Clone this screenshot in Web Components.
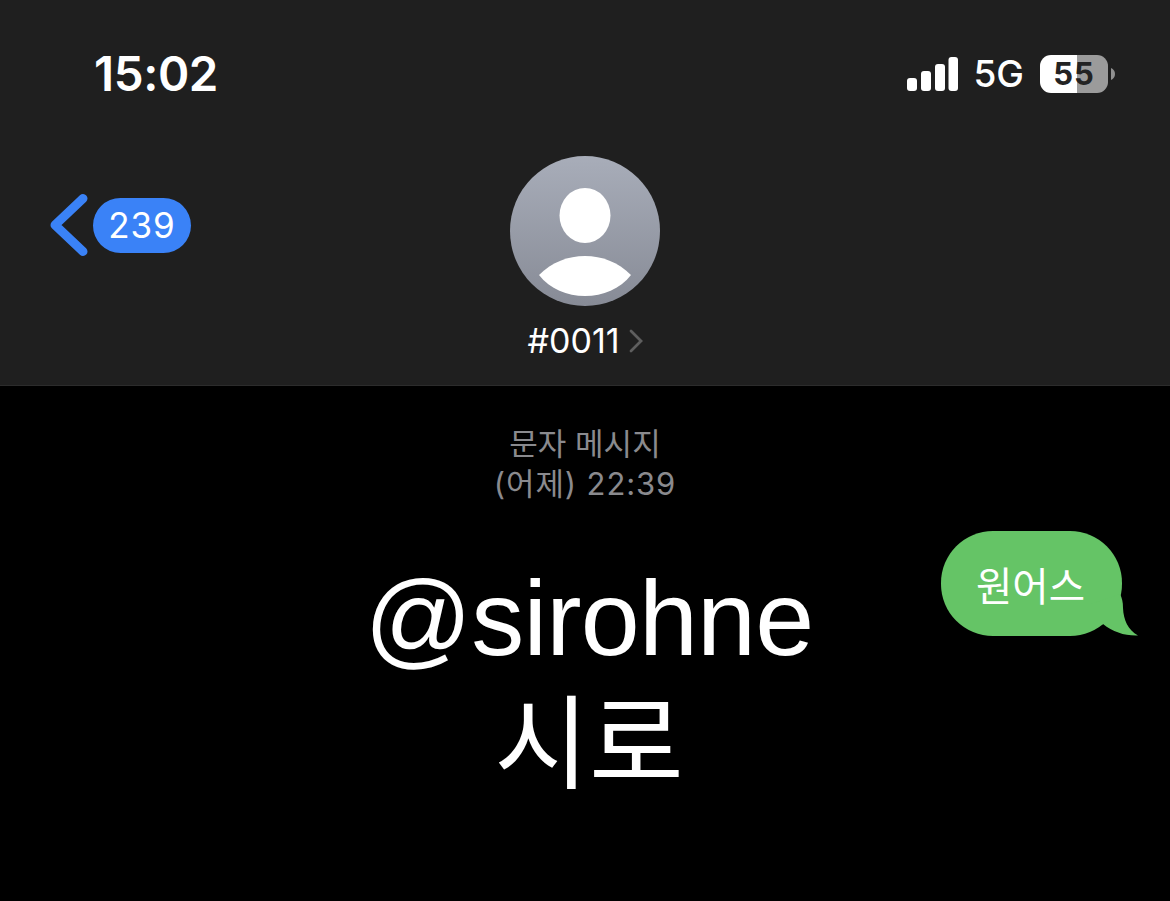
<!DOCTYPE html>
<html lang="ko">
<head>
<meta charset="utf-8">
<title>Messages</title>
<style>
  html, body { margin: 0; height: 100%; background: #000; }
  body { width: 1170px; height: 901px; overflow: hidden; font-family: "Inter", "Noto Sans CJK KR", sans-serif; color: #fff; }
</style>
</head>
<body>
<chat-screen>
  <status-bar slot="header" time="15:02" network="5G" battery="55"></status-bar>
  <contact-nav slot="header" count="239" name="#0011"></contact-nav>
  <message-stamp label="문자 메시지" time="(어제) 22:39"></message-stamp>
  <message-row text="원어스"></message-row>
  <big-caption handle="@sirohne" name="시로"></big-caption>
</chat-screen>

<script>
class chatScreen extends HTMLElement {
  connectedCallback() {
    this.attachShadow({mode: 'open'});
    this.shadowRoot.innerHTML = `
    <style>
      :host { display: flex; flex-direction: column; width: 1170px; height: 901px; background: #000; }
      .chat-screen__header {
        display: flex;
        flex-direction: column;
        height: 385px;
        background: #1f1f1f;
        border-bottom: 1px solid #2c2c2c;
      }
      .chat-screen__body { display: flex; flex-direction: column; }
    </style>
    <div class="chat-screen__header"><slot name="header"></slot></div>
    <div class="chat-screen__body"><slot></slot></div>`;
  }
}

class statusBar extends HTMLElement {
  connectedCallback() {
    const time = this.getAttribute('time');
    const network = this.getAttribute('network');
    const battery = this.getAttribute('battery');
    this.attachShadow({mode: 'open'});
    this.shadowRoot.innerHTML = `
    <style>
      :host { display: flex; justify-content: space-between; align-items: center; height: 150px; padding: 0 55px 0 94px; box-sizing: border-box; margin-bottom: 6px; }
      .status-bar__time { font: 600 47.5px/1 "Inter", sans-serif; letter-spacing: -0.4px; margin-top: -2px; }
      .status-bar__right { display: flex; align-items: center; margin-top: -3px; }
      .status-bar__signal { display: block; margin-right: 15px; }
      .status-bar__network { font: 500 37px/1 "Inter", sans-serif; margin-right: 16px; letter-spacing: 0; }
      .status-bar__battery {
        width: 68px;
        height: 38px;
        border-radius: 11px;
        background: linear-gradient(90deg, #fff 0 37px, #9b9b9b 37px);
        color: #232323;
        font: 700 31px/38px "Inter", sans-serif;
        text-align: center;
        letter-spacing: 1px;
      }
      .status-bar__nub { display: block; margin-left: 3px; }
    </style>
    <div class="status-bar__time">${time}</div>
    <div class="status-bar__right">
      <svg class="status-bar__signal" width="51" height="34" viewBox="0 0 51 34" fill="#fff">
        <rect x="0" y="21" width="10" height="13" rx="3"/>
        <rect x="14" y="14" width="10" height="20" rx="3"/>
        <rect x="28" y="7" width="10" height="27" rx="3"/>
        <rect x="41.5" y="0" width="9.5" height="34" rx="3"/>
      </svg>
      <div class="status-bar__network">${network}</div>
      <div class="status-bar__battery">${battery}</div>
      <svg class="status-bar__nub" width="4" height="12" viewBox="0 0 4 12"><path d="M0 0 C2.6 1 4 3.4 4 6 C4 8.6 2.6 11 0 12Z" fill="#8f8f8f"/></svg>
    </div>`;
  }
}

class contactNav extends HTMLElement {
  connectedCallback() {
    const count = this.getAttribute('count');
    const name = this.getAttribute('name');
    this.attachShadow({mode: 'open'});
    this.shadowRoot.innerHTML = `
    <style>
      :host { display: grid; grid-template-columns: 1fr auto 1fr; }
      .contact-nav__back { display: flex; align-items: center; gap: 5px; height: 150px; align-self: start; margin: -6px 0 0 50px; }
      .contact-nav__back svg { display: block; }
      .contact-nav__count {
        display: flex; align-items: center; justify-content: center;
        width: 98px; height: 55px; border-radius: 27.5px;
        background: #3a82f7;
        font: 400 35px/1 "Inter", sans-serif;
        letter-spacing: 1px;
      }
      .contact-nav__person { display: flex; flex-direction: column; align-items: center; }
      .contact-nav__avatar { display: block; }
      .contact-nav__name {
        display: flex; align-items: center; gap: 9px;
        margin-top: 15px;
        font: 400 34px/39px "Inter", sans-serif;
      }
    </style>
    <div class="contact-nav__back">
      <svg width="38" height="64" viewBox="0 0 38 64" fill="none">
        <path d="M33 5.5 L5 32 L33 58.5" stroke="#3a82f7" stroke-width="9" stroke-linecap="round" stroke-linejoin="round"/>
      </svg>
      <div class="contact-nav__count">${count}</div>
    </div>
    <div class="contact-nav__person">
      <svg class="contact-nav__avatar" width="150" height="150" viewBox="0 0 150 150">
        <defs>
          <linearGradient id="avatar-bg" x1="0" y1="0" x2="0" y2="1">
            <stop offset="0" stop-color="#a8adb9"/>
            <stop offset="1" stop-color="#878b96"/>
          </linearGradient>
        </defs>
        <circle cx="75" cy="75" r="75" fill="url(#avatar-bg)"/>
        <ellipse cx="75" cy="59.5" rx="25.5" ry="27.5" fill="#fff"/>
        <path d="M29 119 C42 106 58 100 75 100 C92 100 108 106 121 119 C110 133 93 140 75 140 C57 140 40 133 29 119Z" fill="#fff"/>
      </svg>
      <div class="contact-nav__name">
        <span>${name}</span>
        <svg width="14" height="24" viewBox="0 0 14 24" fill="none"><path d="M2 2 L12 12 L2 22" stroke="#5e5e5e" stroke-width="2.8" stroke-linecap="round"/></svg>
      </div>
    </div>
    <div></div>`;
  }
}

class messageStamp extends HTMLElement {
  connectedCallback() {
    const label = this.getAttribute('label');
    const time = this.getAttribute('time');
    this.attachShadow({mode: 'open'});
    this.shadowRoot.innerHTML = `
    <style>
      :host { display: flex; flex-direction: column; align-items: center; height: 145px; padding-top: 37px; box-sizing: border-box; color: #8a8a8e; font: 400 31px/41px "Inter", "Noto Sans CJK KR", sans-serif; }
      .message-stamp__time { letter-spacing: 0.9px; margin-top: -1px; }
    </style>
    <div>${label}</div>
    <div class="message-stamp__time">${time}</div>`;
  }
}

class messageRow extends HTMLElement {
  connectedCallback() {
    const text = this.getAttribute('text');
    this.attachShadow({mode: 'open'});
    this.shadowRoot.innerHTML = `
    <style>
      :host { display: flex; justify-content: flex-end; padding-right: 48px; height: 0; }
      .message-row__bubble {
        position: relative;
        display: flex; align-items: center; justify-content: center;
        width: 181px; height: 105px;
        border-radius: 52px;
        background: #65c466;
        color: #fff;
        font: 400 39.5px/1 "Noto Sans CJK KR", sans-serif;
      }
      .message-row__bubble span { position: relative; left: -1px; }
      .message-row__tail { position: absolute; right: -17px; bottom: 0; display: block; }
    </style>
    <div class="message-row__bubble">
      <span>${text}</span>
      <svg class="message-row__tail" width="48" height="42" viewBox="0 0 48 42">
        <path d="M29 0 C31 4 32 8 32 14 C32.5 26 37 36 47 41.5 C34 42 22 38 12 30 L0 36 L0 10Z" fill="#65c466"/>
      </svg>
    </div>`;
  }
}

class bigCaption extends HTMLElement {
  connectedCallback() {
    const handle = this.getAttribute('handle');
    const name = this.getAttribute('name');
    this.attachShadow({mode: 'open'});
    this.shadowRoot.innerHTML = `
    <style>
      :host { display: flex; flex-direction: column; align-items: center; padding-top: 27px; padding-left: 8px; color: #fff; }
      .big-caption__handle { font: 400 106px/120px "Liberation Sans", sans-serif; letter-spacing: -0.8px; }
      .big-caption__name { font: 400 103px/118px "Noto Sans CJK KR", sans-serif; }
    </style>
    <div class="big-caption__handle">${handle}</div>
    <div class="big-caption__name">${name}</div>`;
  }
}

customElements.define('chat-screen', chatScreen);
customElements.define('status-bar', statusBar);
customElements.define('contact-nav', contactNav);
customElements.define('message-stamp', messageStamp);
customElements.define('message-row', messageRow);
customElements.define('big-caption', bigCaption);
</script>
</body>
</html>
